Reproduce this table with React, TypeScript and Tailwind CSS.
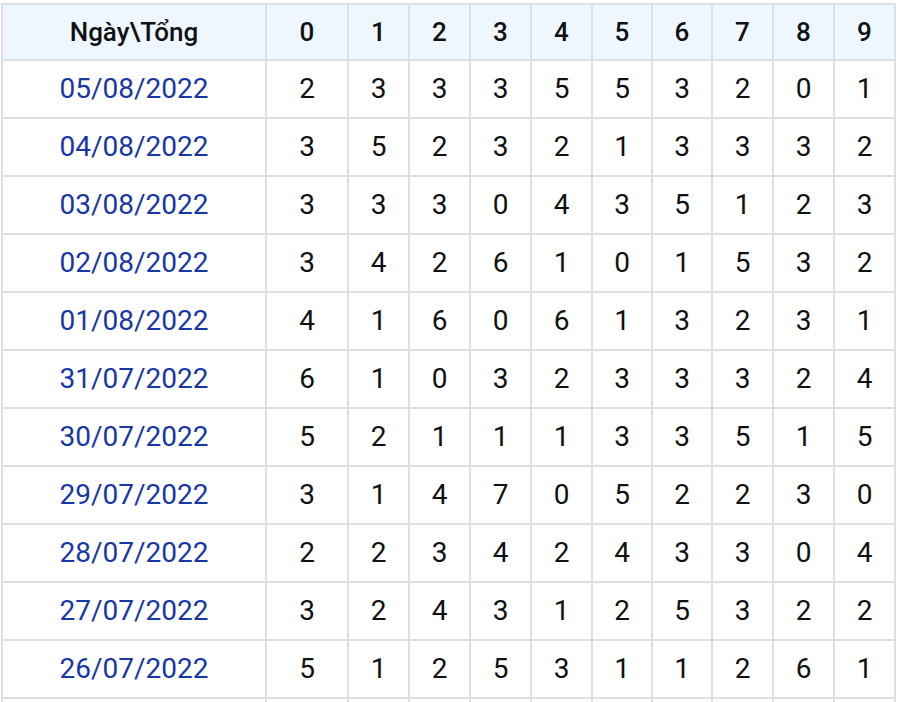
const headers = ["0", "1", "2", "3", "4", "5", "6", "7", "8", "9"];

const rows: { date: string; values: number[] }[] = [
  { date: "05/08/2022", values: [2, 3, 3, 3, 5, 5, 3, 2, 0, 1] },
  { date: "04/08/2022", values: [3, 5, 2, 3, 2, 1, 3, 3, 3, 2] },
  { date: "03/08/2022", values: [3, 3, 3, 0, 4, 3, 5, 1, 2, 3] },
  { date: "02/08/2022", values: [3, 4, 2, 6, 1, 0, 1, 5, 3, 2] },
  { date: "01/08/2022", values: [4, 1, 6, 0, 6, 1, 3, 2, 3, 1] },
  { date: "31/07/2022", values: [6, 1, 0, 3, 2, 3, 3, 3, 2, 4] },
  { date: "30/07/2022", values: [5, 2, 1, 1, 1, 3, 3, 5, 1, 5] },
  { date: "29/07/2022", values: [3, 1, 4, 7, 0, 5, 2, 2, 3, 0] },
  { date: "28/07/2022", values: [2, 2, 3, 4, 2, 4, 3, 3, 0, 4] },
  { date: "27/07/2022", values: [3, 2, 4, 3, 1, 2, 5, 3, 2, 2] },
  { date: "26/07/2022", values: [5, 1, 2, 5, 3, 1, 1, 2, 6, 1] },
];

const App = () => {
  return (
    <div
      className="bg-white pt-[3px] pl-[1px] w-[899px]"
      style={{ fontFamily: "Roboto, 'Liberation Sans', sans-serif" }}
    >
      <div className="grid w-[895px] grid-cols-[262px_80px_59px_59px_59px_59px_58px_58px_59px_59px_59px] gap-[2px] bg-[#dedfe5] p-[2px]">
        {/* header */}
        <div className="flex h-[54px] items-center justify-center bg-[#eef7ff] text-[26px] font-medium text-[#111]">
          Ngày\Tổng
        </div>
        {headers.map((h) => (
          <div
            key={h}
            className="flex h-[54px] items-center justify-center bg-[#eef7ff] text-[26px] font-medium text-[#111]"
          >
            {h}
          </div>
        ))}

        {/* body */}
        {rows.map((row) => (
          <>
            <div
              key={row.date}
              className="flex h-[56px] items-center justify-center bg-white text-[28px] text-[#1737a8]"
            >
              {row.date}
            </div>
            {row.values.map((v, i) => (
              <div
                key={row.date + i}
                className="flex h-[56px] items-center justify-center bg-white text-[28px] text-[#111]"
              >
                {v}
              </div>
            ))}
          </>
        ))}

        {/* next row, below the fold */}
        {Array.from({ length: 11 }).map((_, i) => (
          <div key={"more" + i} className="h-[56px] bg-white" />
        ))}
      </div>
    </div>
  );
};

export default App;
